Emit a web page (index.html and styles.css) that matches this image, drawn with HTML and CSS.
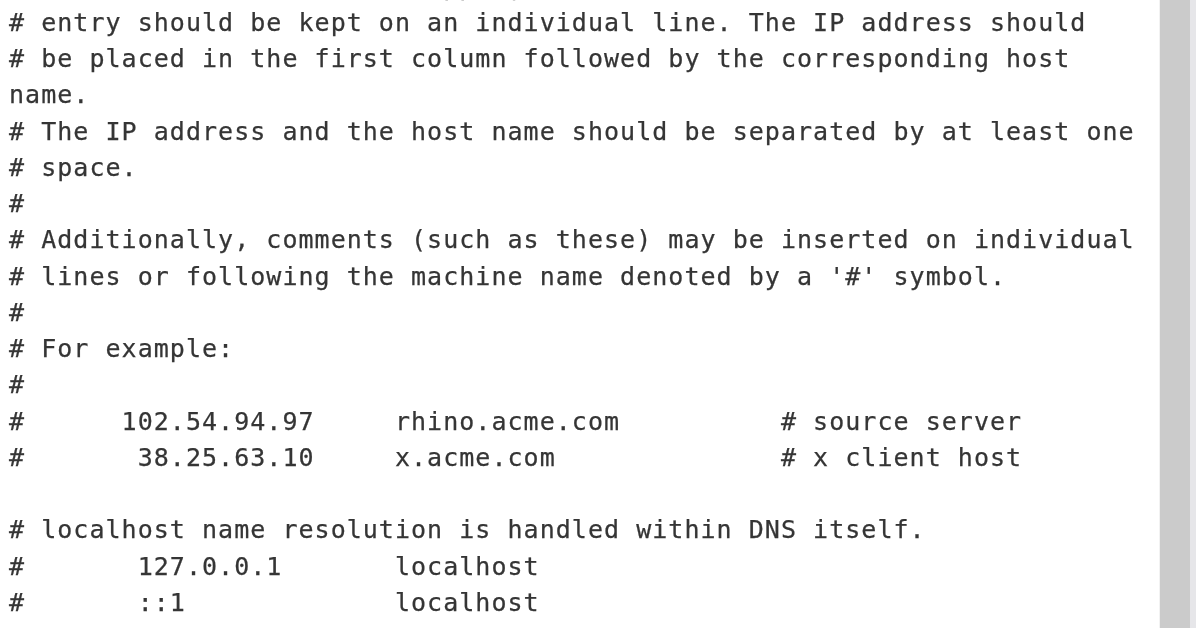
FILE: index.html
```html
<!DOCTYPE html>
<html lang="en">
<head>
<meta charset="utf-8">
<title>hosts - Notepad</title>
<link rel="stylesheet" href="styles.css">
</head>
<body>
<div class="window">
  <div class="editor">
<pre class="text"># This file contains the mappings of IP addresses to host names. Each
# entry should be kept on an individual line. The IP address should
# be placed in the first column followed by the corresponding host
name.
# The IP address and the host name should be separated by at least one
# space.
#
# Additionally, comments (such as these) may be inserted on individual
# lines or following the machine name denoted by a '#' symbol.
#
# For example:
#
#      102.54.94.97     rhino.acme.com          # source server
#       38.25.63.10     x.acme.com              # x client host

# localhost name resolution is handled within DNS itself.
#       127.0.0.1       localhost
#       ::1             localhost
        54.109.55.101   myserver.local</pre>
  </div>
  <div class="scrollbar"><div class="thumb"></div></div>
</div>
</body>
</html>
```
FILE: styles.css
```css
html, body {
  margin: 0;
  padding: 0;
  background: #ffffff;
  overflow: hidden;
}

.window {
  display: flex;
  width: 1196px;
  height: 628px;
  overflow: hidden;
}

.editor {
  flex: 1;
  overflow: hidden;
  padding-left: 9px;
}

.text {
  margin: -31.4px 0 0 0;
  font-family: "DejaVu Sans Mono", "Liberation Mono", monospace;
  font-size: 25px;
  letter-spacing: 1.03px;
  line-height: 36.25px;
  color: #353535;
  white-space: pre;
  -webkit-text-stroke: 0.25px #353535;
  filter: blur(0.35px);
}

.scrollbar {
  width: 36px;
  display: flex;
  background: #e6e6e9;
  border-left: 1px solid #f2f2f2;
}

.thumb {
  width: 30px;
  background: #cbcbcb;
}
```
